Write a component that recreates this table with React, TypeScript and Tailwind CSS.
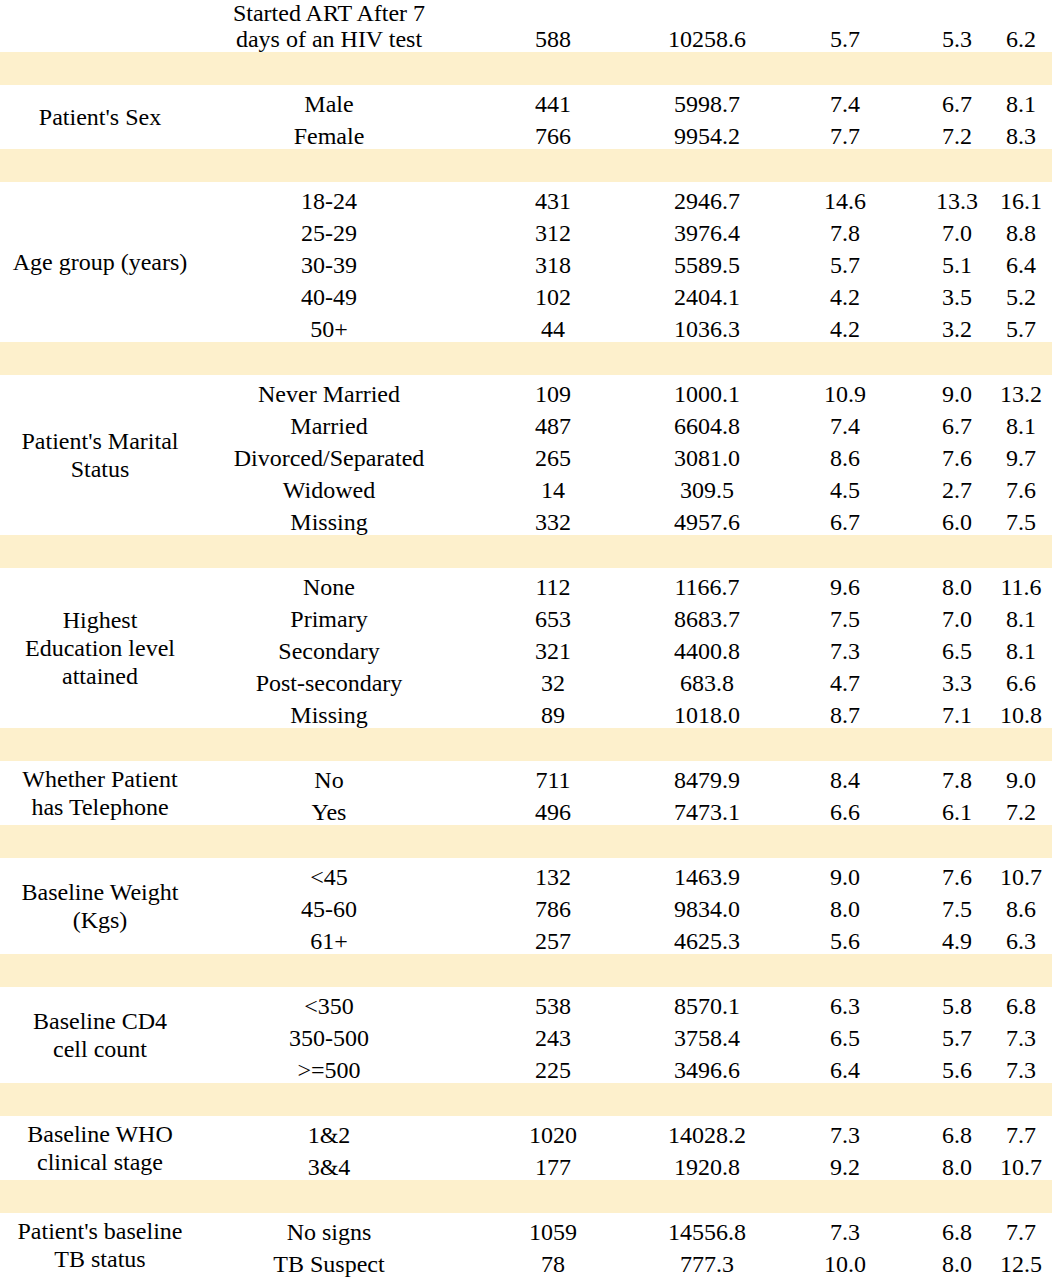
const cols = 'grid grid-cols-[200px_258px_190px_118px_158px_66px_62px]';

type Row = [string, string, string, string, string, string];

interface Group {
  label: string[];
  rows: Row[];
}

const groups: Group[] = [
  {
    label: ["Patient's Sex"],
    rows: [
      ['Male', '441', '5998.7', '7.4', '6.7', '8.1'],
      ['Female', '766', '9954.2', '7.7', '7.2', '8.3'],
    ],
  },
  {
    label: ['Age group (years)'],
    rows: [
      ['18-24', '431', '2946.7', '14.6', '13.3', '16.1'],
      ['25-29', '312', '3976.4', '7.8', '7.0', '8.8'],
      ['30-39', '318', '5589.5', '5.7', '5.1', '6.4'],
      ['40-49', '102', '2404.1', '4.2', '3.5', '5.2'],
      ['50+', '44', '1036.3', '4.2', '3.2', '5.7'],
    ],
  },
  {
    label: ["Patient's Marital", 'Status'],
    rows: [
      ['Never Married', '109', '1000.1', '10.9', '9.0', '13.2'],
      ['Married', '487', '6604.8', '7.4', '6.7', '8.1'],
      ['Divorced/Separated', '265', '3081.0', '8.6', '7.6', '9.7'],
      ['Widowed', '14', '309.5', '4.5', '2.7', '7.6'],
      ['Missing', '332', '4957.6', '6.7', '6.0', '7.5'],
    ],
  },
  {
    label: ['Highest', 'Education level', 'attained'],
    rows: [
      ['None', '112', '1166.7', '9.6', '8.0', '11.6'],
      ['Primary', '653', '8683.7', '7.5', '7.0', '8.1'],
      ['Secondary', '321', '4400.8', '7.3', '6.5', '8.1'],
      ['Post-secondary', '32', '683.8', '4.7', '3.3', '6.6'],
      ['Missing', '89', '1018.0', '8.7', '7.1', '10.8'],
    ],
  },
  {
    label: ['Whether Patient', 'has Telephone'],
    rows: [
      ['No', '711', '8479.9', '8.4', '7.8', '9.0'],
      ['Yes', '496', '7473.1', '6.6', '6.1', '7.2'],
    ],
  },
  {
    label: ['Baseline Weight', '(Kgs)'],
    rows: [
      ['<45', '132', '1463.9', '9.0', '7.6', '10.7'],
      ['45-60', '786', '9834.0', '8.0', '7.5', '8.6'],
      ['61+', '257', '4625.3', '5.6', '4.9', '6.3'],
    ],
  },
  {
    label: ['Baseline CD4', 'cell count'],
    rows: [
      ['<350', '538', '8570.1', '6.3', '5.8', '6.8'],
      ['350-500', '243', '3758.4', '6.5', '5.7', '7.3'],
      ['>=500', '225', '3496.6', '6.4', '5.6', '7.3'],
    ],
  },
  {
    label: ['Baseline WHO', 'clinical stage'],
    rows: [
      ['1&2', '1020', '14028.2', '7.3', '6.8', '7.7'],
      ['3&4', '177', '1920.8', '9.2', '8.0', '10.7'],
    ],
  },
  {
    label: ["Patient's baseline", 'TB status'],
    rows: [
      ['No signs', '1059', '14556.8', '7.3', '6.8', '7.7'],
      ['TB Suspect', '78', '777.3', '10.0', '8.0', '12.5'],
    ],
  },
];

const spans: Record<number, string> = {
  2: 'row-span-2',
  3: 'row-span-3',
  5: 'row-span-5',
};

function Band() {
  return <div className="h-[33px] bg-[#fdf0cc]" />;
}

export default function App() {
  return (
    <div className="min-h-screen bg-white">
      <div className="w-[1052px] font-[family-name:Liberation_Serif,Times_New_Roman,serif] text-[24px] text-black">
        <div className={`${cols} h-[52px] items-end pb-[4px] text-center leading-[26px]`}>
          <div />
          <div>
            Started ART After 7
            <br />
            days of an HIV test
          </div>
          <div>588</div>
          <div>10258.6</div>
          <div>5.7</div>
          <div>5.3</div>
          <div>6.2</div>
        </div>

        {groups.map((g) => (
          <div key={g.label.join(' ')}>
            <Band />
            <div className={`${cols} auto-rows-[32px] text-center`}>
              <div className={`${spans[g.rows.length]} flex flex-col items-center justify-center leading-[28px]`}>
                {g.label.map((l) => (
                  <span key={l} className="whitespace-nowrap">
                    {l}
                  </span>
                ))}
              </div>
              {g.rows.map((r) =>
                r.map((cell, i) => (
                  <div
                    key={`${r[0]}-${i}`}
                    className={`whitespace-nowrap pt-[6px] leading-[26px] ${i === 0 ? 'col-start-2' : ''}`}
                  >
                    {cell}
                  </div>
                ))
              )}
            </div>
          </div>
        ))}
      </div>
    </div>
  );
}
